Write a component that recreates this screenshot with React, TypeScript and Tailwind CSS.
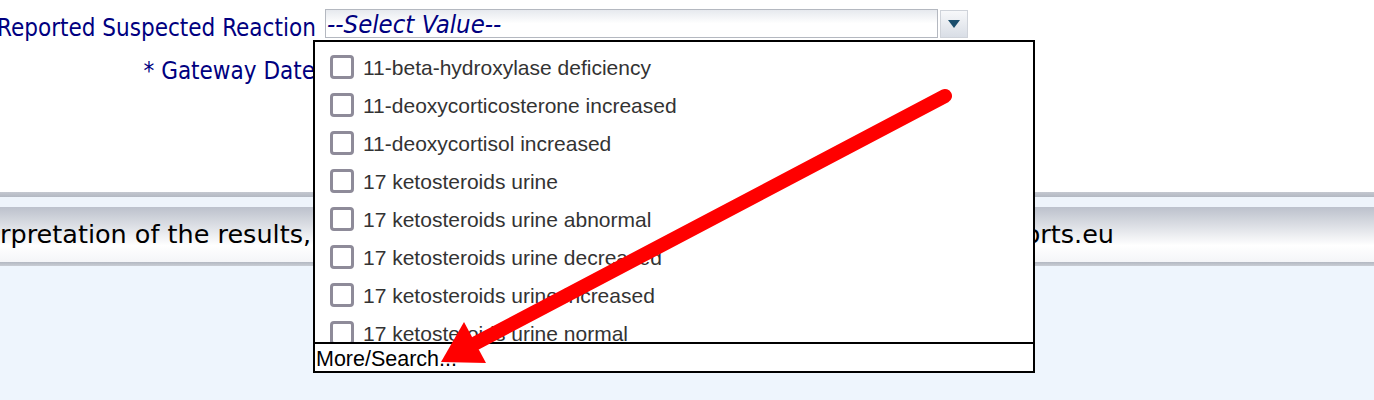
import type { ReactNode } from "react"

const items = [
  "11-beta-hydroxylase deficiency",
  "11-deoxycorticosterone increased",
  "11-deoxycortisol increased",
  "17 ketosteroids urine",
  "17 ketosteroids urine abnormal",
  "17 ketosteroids urine decreased",
  "17 ketosteroids urine increased",
  "17 ketosteroids urine normal",
  "17 ketosteroids urine abnormal",
]

function Label({ children }: { children: ReactNode }) {
  return (
    <div className="w-[318px] shrink-0 whitespace-nowrap text-right text-[24px] leading-[28px] text-[#000080] [font-family:'DejaVu_Sans_Condensed','DejaVu_Sans',sans-serif]">
      {children}
    </div>
  )
}

function Checkbox() {
  return <span className="h-6 w-6 shrink-0 rounded-[4px] border-[3px] border-[#8e8b99] bg-white" />
}

export default function App() {
  return (
    <div className="relative h-[400px] w-[1374px] overflow-hidden bg-white">
      {/* form rows */}
      <div className="flex h-[192px] flex-col pt-[9px]">
        <div className="flex items-start">
          <div className="-ml-[3px] mt-[5px]">
            <Label>Reported Suspected Reaction</Label>
          </div>
          <div className="ml-[10px] flex h-[29px] w-[613px] items-start border border-[#b4b8c0] bg-gradient-to-b from-[#e6e9ee] via-white to-white pl-[1px]">
            <span className="mt-[1px] text-[25.5px] italic leading-[27px] text-[#000080] [font-family:'DejaVu_Sans_Condensed','DejaVu_Sans',sans-serif]">
              --Select Value--
            </span>
          </div>
          <button
            type="button"
            className="ml-[2px] mt-[1px] flex h-[28px] w-[28px] items-center justify-center border border-[#cfd3da] bg-gradient-to-b from-[#f7f8fa] to-[#d9dee6]"
          >
            <svg width="12" height="8" viewBox="0 0 12 8">
              <path d="M0 0h12L6 8z" fill="#1b4e6d" />
            </svg>
          </button>
        </div>
        <div className="mt-[15px] flex">
          <div className="-ml-[3px]">
            <Label>* Gateway Date</Label>
          </div>
        </div>
      </div>

      {/* results band */}
      <div className="h-[5px] bg-gradient-to-b from-[#c4c8d0] to-[#b3b8c2]" />
      <div className="h-[10px] bg-[#eef4fb]" />
      <div className="flex h-[55px] items-center bg-gradient-to-b from-[#bcc1cc] via-white via-70% to-[#f4f5f8]">
        <div className="flex w-[1114px] justify-between whitespace-nowrap text-[25.5px] leading-none text-black [font-family:'DejaVu_Sans',sans-serif]">
          <span>rpretation of the results, please</span>
          <span>www.adrreports.eu</span>
        </div>
      </div>
      <div className="h-[4px] bg-gradient-to-b from-[#b3b8c2] to-[#c9cdd4]" />
      <div className="h-[134px] bg-[#eef5fd]" />

      {/* open multi-select list */}
      <div className="absolute left-[313px] top-[40px] flex h-[333px] w-[722px] flex-col border-2 border-black bg-white">
        <div className="h-[300px] overflow-hidden pt-[6px]">
          {items.map((item, i) => (
            <div key={i} className="flex h-[38px] items-center gap-[9px] pl-[15px]">
              <Checkbox />
              <span className="whitespace-nowrap text-[21px] leading-none text-[#333333] [font-family:'Liberation_Sans',Arial,sans-serif]">
                {item}
              </span>
            </div>
          ))}
        </div>
        <div className="flex h-[29px] items-center border-t-2 border-black pt-[4px]">
          <span className="pl-[1px] text-[21.5px] leading-none text-black [font-family:'Liberation_Sans',Arial,sans-serif]">
            More/Search...
          </span>
        </div>
      </div>

      {/* annotation arrow */}
      <svg className="pointer-events-none absolute left-0 top-0" width="1374" height="400">
        <line x1="945" y1="96" x2="476" y2="343" stroke="#ff0000" strokeWidth="14" strokeLinecap="round" />
        <polygon points="441,362 464,322 486,363" fill="#ff0000" />
      </svg>
    </div>
  )
}
